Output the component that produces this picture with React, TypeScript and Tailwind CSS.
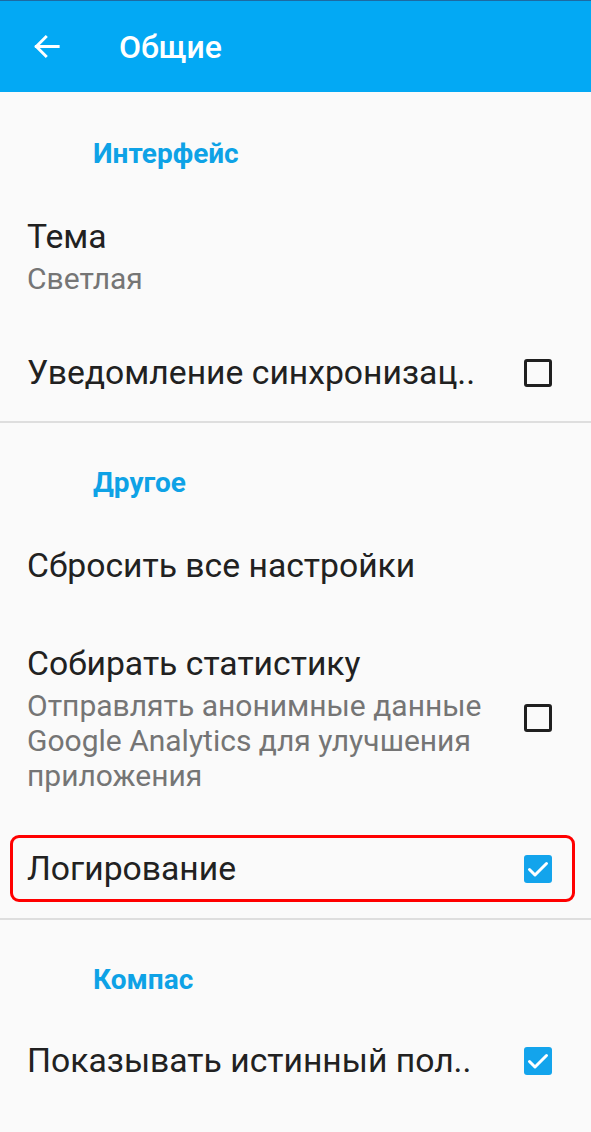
const font = { fontFamily: 'Roboto, "Noto Sans", sans-serif' };

const Checkbox = ({ checked }: { checked?: boolean }) =>
    checked ? (
        <div className="h-[28px] w-[28px] rounded-[3px] bg-[#13a4ec]">
            <svg viewBox="0 0 28 28" className="h-[28px] w-[28px]" fill="none">
                <path
                    d="M5.5 14.5l5.5 5.5L22.5 8.5"
                    stroke="white"
                    strokeWidth="3"
                    strokeLinecap="round"
                    strokeLinejoin="round"
                />
            </svg>
        </div>
    ) : (
        <div className="h-[28px] w-[28px] rounded-[3px] border-[3.5px] border-[#1f1f1f]" />
    );

const Category = ({ title }: { title: string }) => (
    <div className="pl-[93px] text-[28px] leading-[30px] font-bold text-[#0ea2e6]">
        {title}
    </div>
);

const Divider = () => <div className="h-[2px] w-full bg-[#dedede]" />;

export default function App() {
    return (
        <div
            style={font}
            className="flex h-[1132px] w-[591px] flex-col overflow-hidden bg-[#fafafa]"
        >
            {/* App bar */}
            <div className="flex h-[92px] shrink-0 items-center border-t border-[#1c6aa3] bg-[#03a9f4] text-white">
                <svg
                    viewBox="0 0 24 24"
                    className="ml-[29px] h-[35px] w-[35px]"
                    fill="none"
                    stroke="white"
                    strokeWidth="2"
                    strokeLinecap="square"
                >
                    <path d="M20 12H5M11.5 5.5L5 12l6.5 6.5" />
                </svg>
                <span className="ml-[55px] text-[32px] font-medium">Общие</span>
            </div>

            {/* Интерфейс */}
            <div className="pt-[47px]">
                <Category title="Интерфейс" />
            </div>
            <div className="mt-[47px] px-[27px]">
                <div className="text-[33.7px] leading-[42px] text-[#212121]">Тема</div>
                <div className="text-[30px] leading-[42px] text-[#757575]">Светлая</div>
            </div>
            <div className="mt-[52px] flex items-center justify-between pr-[39px] pl-[27px]">
                <div className="text-[33.7px] leading-[42px] text-[#212121]">
                    Уведомление синхронизац..
                </div>
                <Checkbox />
            </div>
            <div className="mt-[27px]">
                <Divider />
            </div>

            {/* Другое */}
            <div className="pt-[45px]">
                <Category title="Другое" />
            </div>
            <div className="mt-[47px] px-[27px] text-[33.7px] leading-[42px] text-[#212121]">
                Сбросить все настройки
            </div>
            <div className="mt-[56px] flex items-center justify-between pr-[39px] pl-[27px]">
                <div className="w-[470px]">
                    <div className="text-[33.7px] leading-[42px] text-[#212121]">
                        Собирать статистику
                    </div>
                    <div className="mt-[3px] text-[30px] leading-[35px] text-[#757575]">
                        Отправлять анонимные данные Google Analytics для улучшения
                        приложения
                    </div>
                </div>
                <Checkbox />
            </div>
            <div className="mt-[42px] pr-[16px] pl-[10px]">
                <div className="flex h-[67px] items-center justify-between rounded-[9px] border-[3px] border-[#ff0000] pr-[20px] pl-[14px]">
                    <div className="text-[33.7px] leading-[42px] text-[#212121]">
                        Логирование
                    </div>
                    <Checkbox checked />
                </div>
            </div>
            <div className="mt-[16px]">
                <Divider />
            </div>

            {/* Компас */}
            <div className="pt-[45px]">
                <Category title="Компас" />
            </div>
            <div className="mt-[45px] flex items-center justify-between pr-[39px] pl-[27px]">
                <div className="text-[33.7px] leading-[42px] text-[#212121]">
                    Показывать истинный пол..
                </div>
                <Checkbox checked />
            </div>
        </div>
    );
}
